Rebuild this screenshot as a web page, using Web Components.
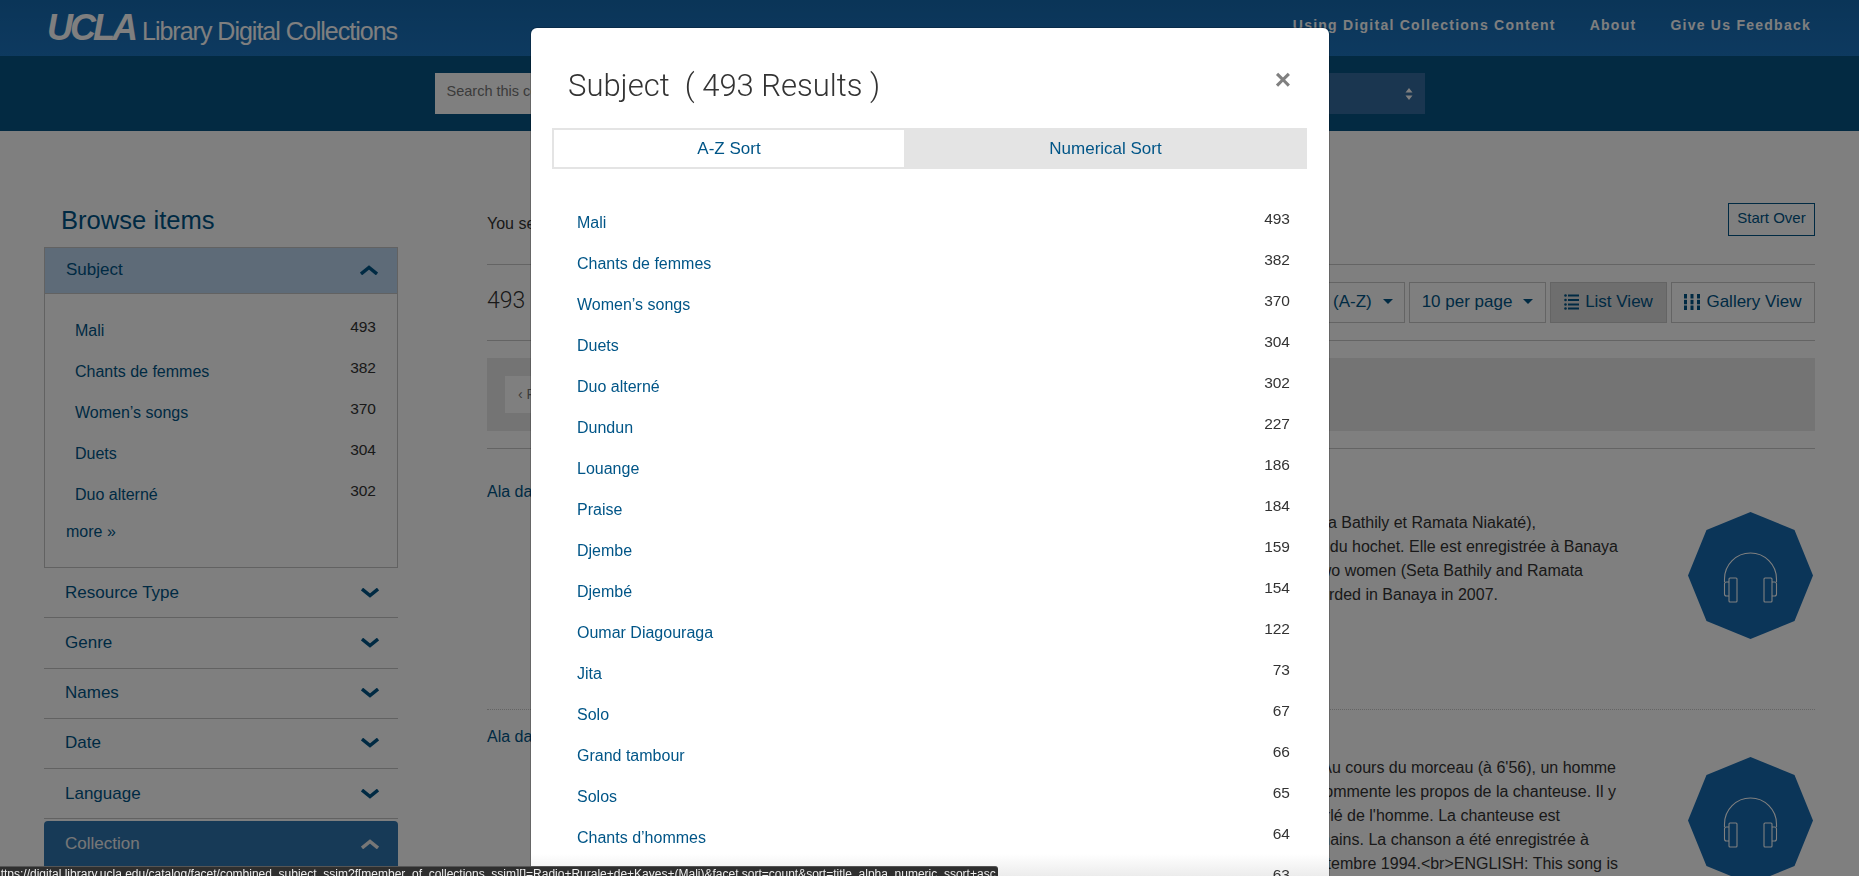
<!DOCTYPE html>
<html lang="en">
<head>
<meta charset="utf-8">
<title>UCLA Library Digital Collections</title>
<style>
  html, body { margin: 0; height: 100%; overflow: hidden; background: #fff; }
  body { font-family: "Liberation Sans", Arial, sans-serif; font-size: 16px; color: #333; }
  .columns { display: flex; gap: 89px; padding: 0 44px; margin-top: 71px; }
</style>
</head>
<body>
<template id="site-header-tpl">
  <style>
    :host { display: block; }
    .top {
      height: 56px; display: flex; align-items: center; justify-content: space-between;
      padding: 0 48px 0 47px; background: linear-gradient(#156ab0, #1c74c0); color: #fff;
    }
    .logo { display: flex; align-items: baseline; gap: 7px; white-space: nowrap; }
    .ucla { font: italic 700 36px "Liberation Sans", sans-serif; letter-spacing: -3px; }
    .name { font-size: 25px; letter-spacing: -1px; }
    nav { display: flex; gap: 34px; font-weight: 700; font-size: 14px; letter-spacing: 1.25px; margin-top: -7px; }
    .sub { height: 75px; background: #065484; display: flex; justify-content: center; padding: 17px 0 0 0; box-sizing: border-box; }
    .search { display: flex; width: 990px; height: 41px; }
    .q { flex: 1; background: #fff; color: #777; font-size: 14.5px; padding: 10px 12px 0; box-sizing: border-box; }
    .scope { width: 320px; background: #346da0; position: relative; }
    .scope svg { position: absolute; right: 12px; top: 15px; }
  </style>
  <div class="top">
    <div class="logo"><span class="ucla">UCLA</span><span class="name">Library Digital Collections</span></div>
    <nav><span>Using Digital Collections Content</span><span>About</span><span>Give Us Feedback</span></nav>
  </div>
  <div class="sub">
    <div class="search">
      <div class="q">Search this collection</div>
      <div class="scope"><svg width="8" height="12" viewBox="0 0 8 12"><path d="M4 0l3.5 4.5H.5zM4 12L.5 7.500h7z" fill="#fff"/></svg></div>
    </div>
  </div>
</template>

<template id="facet-group-tpl">
  <style>
    :host { display: block; border-bottom: 1px solid #c4c4c4; --c: #005587; }
    :host([open]) { border-bottom: 0; }
    :host([dark]) { border: 0; margin-top: 2px; height: 60px; background: #2e75ae; border-radius: 4px 4px 0 0; --c: #eee; }
    .head {
      height: 49.25px; display: flex; align-items: center; justify-content: space-between;
      padding: 0 19px 0 21px; color: var(--c); font-size: 17px; box-sizing: border-box;
    }
    :host([open]) .head { height: 47px; background: #bcd6f0; border: 1px solid #c4c4c4; padding-bottom: 2px; }
    :host([dark]) .head { height: 45px; background: none; border: 0; padding-bottom: 0; }
    svg { display: block; }
    .body { display: none; }
    :host([open]:not([dark])) .body {
      display: block; border: 1px solid #c4c4c4; border-top: 0; height: 274px; box-sizing: border-box; padding: 16px 21px 0 30px;
    }
  </style>
  <div class="head"><span id="label"></span><svg width="18" height="10" viewBox="0 0 18 10"><path id="chev" fill="none" stroke="currentColor" stroke-width="3.400"/></svg></div>
  <div class="body"><slot></slot></div>
</template>

<template id="facet-row-tpl">
  <style>
    :host { display: block; height: 41px; }
    .row { display: flex; justify-content: space-between; }
    a { color: #005587; font-size: 16px; line-height: 41px; }
    span { font-size: 15.5px; color: #333; line-height: 33px; }
  </style>
  <div class="row"><a><slot></slot></a><span id="count"></span></div>
</template>

<template id="search-result-tpl">
  <style>
    :host { display: block; height: 244px; margin-bottom: 1px; box-sizing: border-box; border-bottom: 1px dotted #c8c8c8; }
    :host(:last-child) { border-bottom: 0; }
    .title { color: #005587; font-size: 16px; padding-top: 17px; line-height: 18px; }
    .body { display: flex; justify-content: flex-end; gap: 70px; margin-top: 11px; }
    .text { font-size: 16px; line-height: 24px; color: #333; margin-top: -1px; white-space: nowrap; text-align: right; }
    svg { flex: none; width: 125px; height: 127px; margin-right: 2px; }
  </style>
  <div class="title" id="title"></div>
  <div class="body">
    <div class="text"><slot></slot></div>
    <svg viewBox="0 0 125 127">
      <path d="M62.500 0L106.500 18 125 63.500 106.500 109 62.500 127 18.500 109 0 63.500 18.500 18z" fill="#166ab0"/>
      <g transform="translate(35.500 40)" fill="none" stroke="#fff" stroke-width="1.100">
        <path d="M1 30V27A26 26 0 0 1 53 27V30"/>
        <rect x="5.500" y="26" width="8" height="24" rx="1"/>
        <rect x="40.500" y="26" width="8" height="24" rx="1"/>
        <path d="M5.500 30H3Q1 30 1 32V42Q1 44 3 44H5.500M48.500 30H51Q53 30 53 32V42Q53 44 51 44H48.500"/>
      </g>
    </svg>
  </div>
</template>

<template id="facet-modal-tpl">
  <style>
    :host {
      position: fixed; inset: 0; display: block; background: rgba(0, 0, 0, .5); z-index: 10;
    }
    .dialog {
      position: absolute; left: 531px; top: 28px; width: 798px; bottom: 0; overflow: hidden;
      background: linear-gradient(#fff calc(100% - 22px), #ececec); border-radius: 6px 6px 0 0;
      box-sizing: border-box; padding: 0 22px 0 21px; box-shadow: 0 0 0 1px rgba(0, 0, 0, .2);
    }
    header { height: 100px; display: flex; justify-content: space-between; padding: 0 18px; }
    h2 { margin: 38px 0 0 -2px; font: 300 31px/40px Roboto, "Liberation Sans", sans-serif; color: #333; white-space: pre; }
    .close { font: 700 28px/30px "Liberation Sans", sans-serif; color: #808080; margin: 37px -2px 0 0; }
    .tabs { display: flex; height: 41px; background: #e4e4e4; border: 2px solid #e4e4e4; box-sizing: border-box; color: #005587; font-size: 17px; }
    .tabs div { display: flex; align-items: center; justify-content: center; }
    .az { width: 350px; background: #fff; }
    .num { flex: 1; padding-left: 2px; }
    ul { list-style: none; margin: 33px 0 0 0; padding: 0 17px 0 25px; }
  </style>
  <div class="dialog">
    <header><h2>Subject  ( 493 Results )</h2><div class="close">×</div></header>
    <div class="tabs"><div class="az">A-Z Sort</div><div class="num">Numerical Sort</div></div>
    <ul><slot></slot></ul>
  </div>
</template>

<template id="status-bubble-tpl">
  <style>
    :host {
      position: fixed; left: 0; bottom: 0; width: 998px; height: 10px; z-index: 20; overflow: hidden; display: block;
      background: #2f2f2f; border-top: 1px solid #555; border-radius: 0 3px 0 0; box-sizing: border-box;
      color: #eee; font-size: 12px; line-height: 14px; white-space: nowrap;
    }
    div { margin-left: -6px; }
  </style>
  <div><slot></slot></div>
</template>

<template id="results-bar-tpl">
  <style>
    :host { display: block; color: #005587; }
    .you { height: 63px; display: flex; justify-content: space-between; border-bottom: 1px solid #c8c8c8; box-sizing: border-box; color: #333; font-size: 16px; }
    .you span { padding-top: 13px; }
    .over { width: 87px; height: 33px; border: 1px solid #005587; box-sizing: border-box; color: #005587; font-size: 15px; text-align: center; line-height: 28px; margin-top: 1px; }
    .tools { height: 76px; display: flex; justify-content: space-between; align-items: center; border-bottom: 1px solid #c8c8c8; box-sizing: border-box; }
    .count { font: 300 23px Roboto, "Liberation Sans", sans-serif; color: #333; margin-top: -4px; }
    .btns { display: flex; gap: 4px; }
    .btn { height: 41px; border: 1px solid #c8c8c8; box-sizing: border-box; display: flex; align-items: center; justify-content: center; gap: 6px; font-size: 17px; padding-bottom: 2px; }
    .btn.on { background: #dcdcdc; }
    .caret { width: 0; height: 0; border: 5px solid transparent; border-top-color: currentColor; border-bottom: 0; margin-left: 5px; }
    .pager { height: 73px; background: #e8e8e8; margin-top: 17px; display: flex; align-items: center; padding-left: 18px; }
    .prev { height: 37px; width: 110px; background: #fff; color: #777; font-size: 14px; line-height: 37px; padding-left: 13px; box-sizing: border-box; }
    .rule { border-bottom: 1px solid #c8c8c8; height: 18px; margin-bottom: 17px; box-sizing: border-box; }
  </style>
  <div class="you"><span>You searched for:</span><div class="over">Start Over</div></div>
  <div class="tools">
    <span class="count">493 Results</span>
    <div class="btns">
      <div class="btn" style="width:200px;padding-left:26px">Sort by title (A-Z)<i class="caret"></i></div>
      <div class="btn" style="width:137px">10 per page<i class="caret"></i></div>
      <div class="btn on" style="width:117px">
        <svg width="15" height="16" viewBox="0 0 15 16" fill="currentColor"><circle cx="1.500" cy="1.500" r="1.300"/><circle cx="1.500" cy="6" r="1.300"/><circle cx="1.500" cy="10.500" r="1.300"/><circle cx="1.500" cy="14.500" r="1.300"/><rect x="4" y="0.500" width="11" height="2"/><rect x="4" y="5" width="11" height="2"/><rect x="4" y="9.500" width="11" height="2"/><rect x="4" y="13.500" width="11" height="2"/></svg>List View</div>
      <div class="btn" style="width:144px">
        <svg width="16" height="16" viewBox="0 0 16 16" fill="currentColor"><rect x="0" y="0" width="3" height="4.500"/><rect x="0" y="5.800" width="3" height="4.500"/><rect x="0" y="11.500" width="3" height="4.500"/><rect x="6.500" y="0" width="3" height="4.500"/><rect x="6.500" y="5.800" width="3" height="4.500"/><rect x="6.500" y="11.500" width="3" height="4.500"/><rect x="13" y="0" width="3" height="4.500"/><rect x="13" y="5.800" width="3" height="4.500"/><rect x="13" y="11.500" width="3" height="4.500"/></svg>Gallery View</div>
    </div>
  </div>
  <div class="pager"><div class="prev">‹ Previous</div></div>
  <div class="rule"></div>
</template>

<site-header></site-header>
<div class="columns">
  <aside style="flex:none;width:354px">
    <div style="font-size:25.6px;color:#005587;padding-left:17px;height:45px;line-height:36px">Browse items</div>
    <facet-group label="Subject" open>
      <facet-row count="493">Mali</facet-row>
      <facet-row count="382">Chants de femmes</facet-row>
      <facet-row count="370">Women’s songs</facet-row>
      <facet-row count="304">Duets</facet-row>
      <facet-row count="302">Duo alterné</facet-row>
      <div style="color:#005587;font-size:16px;margin-left:-9px;margin-top:8px">more »</div>
    </facet-group>
    <facet-group label="Resource Type"></facet-group>
    <facet-group label="Genre"></facet-group>
    <facet-group label="Names"></facet-group>
    <facet-group label="Date"></facet-group>
    <facet-group label="Language"></facet-group>
    <facet-group label="Collection" open dark></facet-group>
  </aside>
  <main style="flex:1;min-width:0">
    <results-bar></results-bar>
    <search-result title="Ala dama">
      <div style="padding-right:82px">(Seta Bathily et Ramata Niakaté),</div>
      <div>du hochet. Elle est enregistrée à Banaya</div>
      <div style="padding-right:35px">two women (Seta Bathily and Ramata</div>
      <div style="padding-right:120px">recorded in Banaya in 2007.</div>
    </search-result>
    <search-result title="Ala dama">
      <div style="padding-right:2px">Au cours du morceau (à 6'56), un homme</div>
      <div style="padding-right:2px">commente les propos de la chanteuse. Il y</div>
      <div style="padding-right:58px">a parlé de l'homme. La chanteuse est</div>
      <div style="padding-right:29px">humains. La chanson a été enregistrée à</div>
      <div>septembre 1994.&lt;br&gt;ENGLISH: This song is</div>
    </search-result>
  </main>
</div>
<facet-modal>
  <facet-row count="493">Mali</facet-row>
  <facet-row count="382">Chants de femmes</facet-row>
  <facet-row count="370">Women’s songs</facet-row>
  <facet-row count="304">Duets</facet-row>
  <facet-row count="302">Duo alterné</facet-row>
  <facet-row count="227">Dundun</facet-row>
  <facet-row count="186">Louange</facet-row>
  <facet-row count="184">Praise</facet-row>
  <facet-row count="159">Djembe</facet-row>
  <facet-row count="154">Djembé</facet-row>
  <facet-row count="122">Oumar Diagouraga</facet-row>
  <facet-row count="73">Jita</facet-row>
  <facet-row count="67">Solo</facet-row>
  <facet-row count="66">Grand tambour</facet-row>
  <facet-row count="65">Solos</facet-row>
  <facet-row count="64">Chants d’hommes</facet-row>
  <facet-row count="63"></facet-row>
</facet-modal>
<status-bubble>https://digital.library.ucla.edu/catalog/facet/combined_subject_ssim?f[member_of_collections_ssim][]=Radio+Rurale+de+Kayes+(Mali)&amp;facet.sort=count&amp;sort=title_alpha_numeric_ssort+asc</status-bubble>

<script>
// every element just clones its template
function plain(tag, onConnect) {
	customElements.define(tag, class extends HTMLElement {
		constructor() {
			super();
			this.attachShadow({ mode: 'open' });
			this.shadowRoot.appendChild(document.getElementById(tag + '-tpl').content.cloneNode(true));
		}
		connectedCallback() {
			if (onConnect) onConnect(this, this.shadowRoot);
		}
	});
}

plain('site-header');
plain('results-bar');
plain('facet-modal');
plain('status-bubble');
plain('facet-group', (el, root) => {
	root.getElementById('label').textContent = el.getAttribute('label');
	const up = el.hasAttribute('open');
	root.getElementById('chev').setAttribute('d', up ? 'M1 9L9 2.500 17 9' : 'M1 1L9 7.500 17 1');
});
plain('facet-row', (el, root) => {
	root.getElementById('count').textContent = el.getAttribute('count');
});
plain('search-result', (el, root) => {
	root.getElementById('title').textContent = el.getAttribute('title');
});
</script>
</body>
</html>
